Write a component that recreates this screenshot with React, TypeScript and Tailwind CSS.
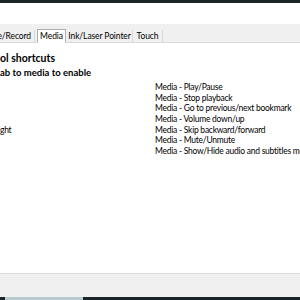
const rows = [
  { key: "", label: "Media - Play/Pause" },
  { key: "", label: "Media - Stop playback" },
  { key: "", label: "Media - Go to previous/next bookmark" },
  { key: "", label: "Media - Volume down/up" },
  { key: "ght", label: "Media - Skip backward/forward" },
  { key: "", label: "Media - Mute/Unmute" },
  { key: "", label: "Media - Show/Hide audio and subtitles menu" },
]

export default function App() {
  return (
    <div className="w-[300px] h-[300px] overflow-hidden bg-white flex flex-col text-black font-['Lato',sans-serif]">
      <div className="h-[3px] bg-[#1b2629] shrink-0" />
      <div className="h-[21px] bg-white shrink-0" />

      {/* Tabs */}
      <div className="h-[19px] shrink-0 bg-[#f0f0f0] border-b border-[#d9d9d9] flex items-end text-[8.5px] tracking-[-0.1px] leading-none">
        <div className="h-[12px] w-[35px] border-r border-[#d9d9d9] flex items-center justify-end pr-[3px] whitespace-nowrap overflow-hidden">
          <span>e/Record</span>
        </div>
        <div className="h-[14px] ml-[2px] w-[29px] -mb-px bg-white border border-[#adadad] border-b-white flex items-center justify-center">
          Media
        </div>
        <div className="h-[12px] ml-[1px] w-[66px] border-r border-[#d9d9d9] flex items-center justify-center whitespace-nowrap">
          Ink/Laser Pointer
        </div>
        <div className="h-[12px] w-[30px] border-r border-[#d9d9d9] flex items-center justify-center">
          Touch
        </div>
      </div>

      {/* Content */}
      <div className="flex-1 flex flex-col pt-[8px]">
        <div className="font-bold text-[10.5px] leading-[14px] whitespace-nowrap">ol shortcuts</div>
        <div className="font-bold text-[9.5px] leading-[15px] whitespace-nowrap">ab to media to enable</div>
        <div className="mt-[2px] flex flex-col text-[8.5px] tracking-[-0.25px] leading-[10.7px]">
          {rows.map((r) => (
            <div key={r.label} className="flex h-[10.7px] whitespace-nowrap">
              <div className="w-[155px] shrink-0">{r.key}</div>
              <div>{r.label}</div>
            </div>
          ))}
        </div>
      </div>

      {/* Bottom */}
      <div className="h-[24px] shrink-0 bg-[#f0f0f0] border-t border-[#dcdcdc]" />
      <div className="h-[3px] shrink-0 bg-[#18232a] flex">
        <div className="ml-[5px] w-[78px] bg-[#b9c9d0]" />
      </div>
    </div>
  )
}
